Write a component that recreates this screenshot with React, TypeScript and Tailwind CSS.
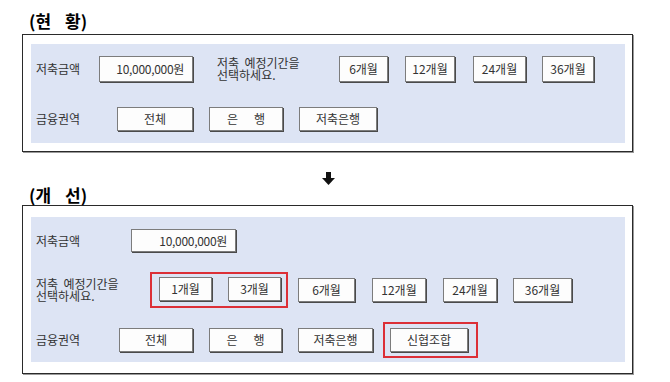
const font = { fontFamily: '"Noto Sans CJK KR", "Noto Sans", sans-serif' };

function Btn({ w, children, className = '' }: { w: string; children: React.ReactNode; className?: string }) {
  return (
    <div
      className={`${w} ${className} h-[24px] flex items-center justify-center gap-4 bg-[#fdfdfd] border border-[#7c7c7c] shadow-[1px_1px_0_#4a4a4a] text-[12px] text-[#333]`}
    >
      {children}
    </div>
  );
}

function Heading({ a, b }: { a: string; b: string }) {
  return (
    <div className="ml-[29px] flex gap-[14px] text-[17px] font-bold leading-[20px] text-black">
      <span>({a}</span>
      <span>{b})</span>
    </div>
  );
}

function Frame({ children, pt, pb }: { children: React.ReactNode; pt: string; pb: string }) {
  return (
    <div className={`ml-[22px] w-[611px] border border-[#2a2a2a] shadow-[1px_1px_0_#9a9a9a] pl-[8px] pr-[7px] ${pt} ${pb} bg-white`}>
      <div className="bg-[#dde4f4]">{children}</div>
    </div>
  );
}

function Label({ w, children }: { w: string; children: React.ReactNode }) {
  return <div className={`${w} pl-[5px] text-[12px] text-[#333] leading-[14px]`}>{children}</div>;
}

const period = '저축\u00a0\u00a0예정기간을\n선택하세요.';

export default function App() {
  return (
    <div className="w-[670px] h-[382px] bg-white overflow-hidden" style={font}>
      <div className="pt-[11px] mb-[3px]">
        <Heading a="현" b="황" />
      </div>

      <Frame pt="pt-[9px]" pb="pb-[8px]">
        <div className="pt-[12px] pb-[12px]">
          <div className="flex items-center h-[26px]">
            <Label w="w-[68px]">저축금액</Label>
            <div className="w-[94px] h-[26px] flex items-center justify-end pr-[8px] bg-[#fdfdfd] border border-[#7c7c7c] shadow-[1px_1px_0_#4a4a4a] text-[12px] text-[#333] tracking-[-0.3px]">
              10,000,000원
            </div>
            <div className="ml-[24px] w-[122px] text-[12px] leading-[12px] text-[#333] whitespace-pre-line">
              {period}
            </div>
            <Btn w="w-[49px]" className="!h-[26px]">6개월</Btn>
            <Btn w="w-[50px]" className="!h-[26px] ml-[17px]">12개월</Btn>
            <Btn w="w-[53px]" className="!h-[26px] ml-[18px]">24개월</Btn>
            <Btn w="w-[52px]" className="!h-[26px] ml-[16px]">36개월</Btn>
          </div>
          <div className="flex items-center mt-[25px]">
            <Label w="w-[86px]">금융권역</Label>
            <Btn w="w-[76px]">전체</Btn>
            <Btn w="w-[74px]" className="ml-[16px]">
              <span>은</span>
              <span>행</span>
            </Btn>
            <Btn w="w-[78px]" className="ml-[16px]">저축은행</Btn>
          </div>
        </div>
      </Frame>

      <div className="h-[33px] pt-[20px] flex justify-center pr-[13px]">
        <svg width="13" height="13" viewBox="0 0 13 13">
          <rect x="4" y="0" width="5" height="7" fill="#111" />
          <polygon points="0,6 13,6 6.5,13" fill="#111" />
        </svg>
      </div>

      <div className="h-[20px]">
        <Heading a="개" b="선" />
      </div>

      <Frame pt="pt-[11px]" pb="pb-[11px]">
        <div className="pt-[12px] pb-[4px] pr-[1px]">
          <div className="flex items-center h-[23px]">
            <Label w="w-[100px]">저축금액</Label>
            <div className="w-[105px] h-[23px] flex items-center justify-end pr-[8px] bg-[#fdfdfd] border border-[#7c7c7c] shadow-[1px_1px_0_#4a4a4a] text-[12px] text-[#333] tracking-[-0.3px]">
              10,000,000원
            </div>
          </div>
          <div className="flex items-center mt-[20px]">
            <div className="w-[119px] pl-[5px] text-[12px] leading-[12px] text-[#333] whitespace-pre-line">
              {period}
            </div>
            <div className="flex items-center border-2 border-[#dc2f37] pl-[7px] pr-[5px] pt-[3px] pb-[5px]">
              <Btn w="w-[53px]">1개월</Btn>
              <Btn w="w-[53px]" className="ml-[16px]">3개월</Btn>
            </div>
            <Btn w="w-[57px]" className="ml-[10px]">6개월</Btn>
            <Btn w="w-[54px]" className="ml-[17px]">12개월</Btn>
            <Btn w="w-[54px]" className="ml-[17px]">24개월</Btn>
            <Btn w="w-[59px]" className="ml-[16px]">36개월</Btn>
          </div>
          <div className="flex items-center mt-[14px]">
            <Label w="w-[88px]">금융권역</Label>
            <Btn w="w-[74px]">전체</Btn>
            <Btn w="w-[73px]" className="ml-[16px]">
              <span>은</span>
              <span>행</span>
            </Btn>
            <Btn w="w-[75px]" className="ml-[16px]">저축은행</Btn>
            <div className="ml-[10px] flex items-center border-2 border-[#dc2f37] pl-[5px] pr-[8px] py-[4px]">
              <Btn w="w-[78px]">신협조합</Btn>
            </div>
          </div>
        </div>
      </Frame>
    </div>
  );
}
